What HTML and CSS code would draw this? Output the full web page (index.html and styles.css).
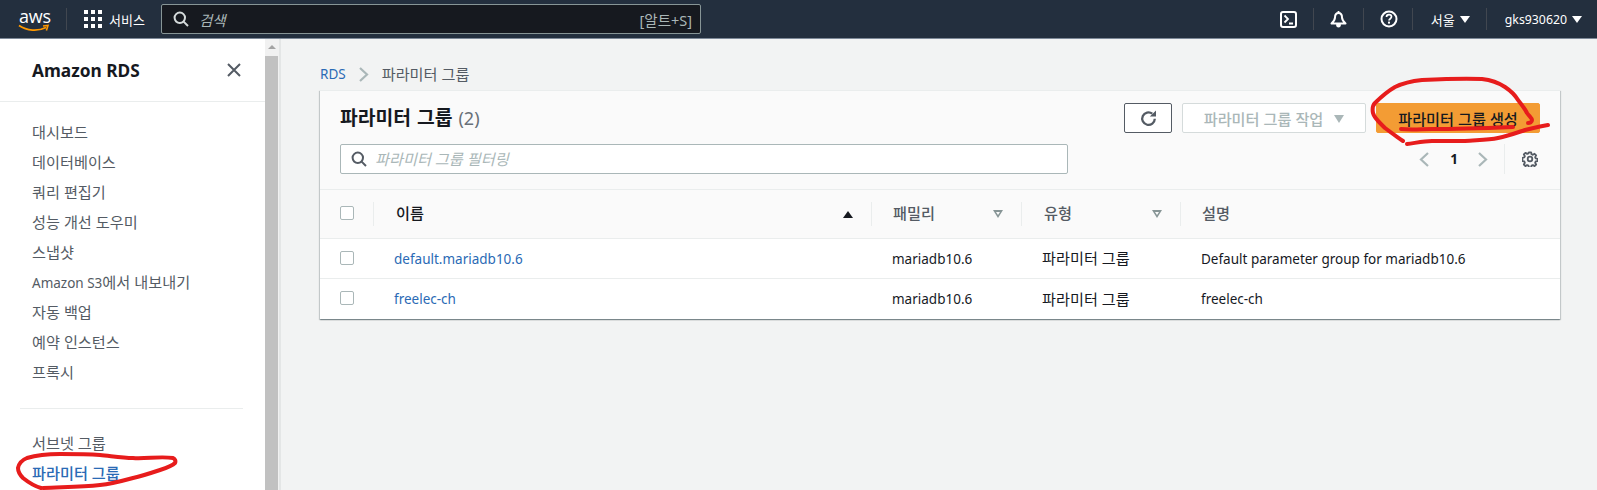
FILE: index.html
```html
<!DOCTYPE html>
<html lang="ko">
<head>
<meta charset="utf-8">
<title>파라미터 그룹</title>
<link rel="stylesheet" href="styles.css">
</head>
<body>
<header class="topbar">
  <div class="logo">
    <span class="logo-text">aws</span>
    <svg class="smile" viewBox="0 0 32 9" width="32" height="9"><path d="M1 1.500C9 7 20 7.500 28 3.500" fill="none" stroke="#f90" stroke-width="1.800"/><path d="M25 2l5-.5-1.600 5" fill="none" stroke="#f90" stroke-width="1.600"/></svg>
  </div>
  <span class="tdiv tdiv-logo"></span>
  <button class="services">
    <span class="grid-ic"><i></i><i></i><i></i><i></i><i></i><i></i><i></i><i></i><i></i></span>
    <span>서비스</span>
  </button>
  <div class="gsearch">
    <svg viewBox="0 0 16 16" width="16" height="16"><circle cx="6.800" cy="6.800" r="5.200" fill="none" stroke="#d5dbdb" stroke-width="2"/><path d="M10.600 10.600 15 15" stroke="#d5dbdb" stroke-width="2"/></svg>
    <span class="gs-text">검색</span>
    <span class="gs-key">[알트+S]</span>
  </div>
  <div class="tright">
    <svg class="ti" viewBox="0 0 17 17" width="17" height="17"><rect x="1" y="1" width="15" height="15" rx="2" fill="none" stroke="#fff" stroke-width="2"/><path d="M4.500 4.500l3.500 3.500-3.500 3.500M9 12.500h4" fill="none" stroke="#fff" stroke-width="1.800"/></svg>
    <span class="tdiv"></span>
    <svg class="ti" viewBox="0 0 17 17" width="17" height="17"><path d="M8.500 2C6 2 5 4 5 6.500c0 2.500-1.200 3.800-3.500 6h14c-2.300-2.200-3.500-3.500-3.500-6C12 4 11 2 8.500 2z" fill="none" stroke="#fff" stroke-width="2" stroke-linejoin="round"/><path d="M6.200 13h4.600v1.200a2.300 2.300 0 0 1-4.600 0z" fill="#fff"/><rect x="7.600" y="0" width="1.800" height="2.500" fill="#fff"/></svg>
    <span class="tdiv"></span>
    <svg class="ti ti-last" viewBox="0 0 18 18" width="18" height="18"><circle cx="9" cy="9" r="7.500" fill="none" stroke="#fff" stroke-width="2"/><path d="M6.500 7c0-1.500 1-2.400 2.500-2.400s2.500 1 2.500 2.200c0 1.800-2.500 2-2.500 3.700" fill="none" stroke="#fff" stroke-width="1.700"/><rect x="8" y="11.600" width="2" height="2" fill="#fff"/></svg>
    <span class="tdiv"></span>
    <span class="tmenu tmenu-ko">서울<i class="tri-w"></i></span>
    <span class="tdiv"></span>
    <span class="tmenu tmenu-end">gks930620<i class="tri-w"></i></span>
  </div>
</header>
<div class="page">
  <aside class="side">
    <div class="side-head">
      <h2>Amazon RDS</h2>
      <svg viewBox="0 0 14 14" width="14" height="14"><path d="M1 1l12 12M13 1 1 13" stroke="#545b64" stroke-width="2"/></svg>
    </div>
    <nav class="side-nav">
      <a>대시보드</a><a>데이터베이스</a><a>쿼리 편집기</a><a>성능 개선 도우미</a><a>스냅샷</a><a><span class="lat">Amazon S3</span>에서 내보내기</a><a>자동 백업</a><a>예약 인스턴스</a><a>프록시</a>
    </nav>
    <hr class="side-hr">
    <nav class="side-nav side-nav2">
      <a>서브넷 그룹</a><a class="active">파라미터 그룹</a>
    </nav>
  </aside>
  <div class="sbar"><span class="sbar-up"></span><span class="sbar-thumb"></span></div>
  <main class="main">
    <div class="crumbs">
      <a>RDS</a>
      <svg viewBox="0 0 10 15" width="10" height="15"><path d="M1 1l7 6.500-7 6.500" fill="none" stroke="#aab7b8" stroke-width="2.200"/></svg>
      <span class="ko">파라미터 그룹</span>
    </div>
    <section class="card">
      <div class="card-head">
        <div class="head-row">
          <h1>파라미터 그룹 <span>(2)</span></h1>
          <div class="actions">
            <button class="btn btn-refresh"><svg viewBox="0 0 17 17" width="17" height="17"><path d="M14.800 8.800A6.300 6.300 0 1 1 12.300 3.600" fill="none" stroke="#545b64" stroke-width="2.300"/><path d="M9.800 6.500h6.200V.4z" fill="#545b64"/></svg></button>
            <button class="btn btn-off">파라미터 그룹 작업<i class="tri-g"></i></button>
            <button class="btn btn-main">파라미터 그룹 생성</button>
          </div>
        </div>
        <div class="filter-row">
          <div class="filter">
            <svg viewBox="0 0 16 16" width="16" height="16"><circle cx="6.800" cy="6.800" r="5.200" fill="none" stroke="#545b64" stroke-width="2"/><path d="M10.600 10.600 15 15" stroke="#545b64" stroke-width="2"/></svg>
            <span>파라미터 그룹 필터링</span>
          </div>
          <div class="pager">
            <svg viewBox="0 0 10 15" width="10" height="15"><path d="M9 1 2 7.500 9 14" fill="none" stroke="#aab7b8" stroke-width="2.200"/></svg>
            <b>1</b>
            <svg viewBox="0 0 10 15" width="10" height="15"><path d="M1 1l7 6.500-7 6.500" fill="none" stroke="#aab7b8" stroke-width="2.200"/></svg>
            <span class="pager-div"></span>
            <svg viewBox="0 0 16 16" width="16" height="16"><circle cx="8" cy="8" r="2.300" fill="none" stroke="#545b64" stroke-width="1.800"/><path d="M6.800 1h2.400l.4 2 1.400.6 1.800-1.100 1.700 1.700-1.100 1.800.6 1.400 2 .4v2.400l-2 .4-.6 1.400 1.100 1.800-1.700 1.700-1.800-1.100-1.400.6-.4 2H6.800l-.4-2-1.400-.6-1.800 1.100-1.700-1.700 1.100-1.800-.6-1.400-2-.4V6.800l2-.4.6-1.400-1.100-1.800 1.700-1.700 1.800 1.100 1.400-.6z" fill="none" stroke="#545b64" stroke-width="1.900" stroke-linejoin="round" transform="translate(.4 .4) scale(.95)"/></svg>
          </div>
        </div>
      </div>
      <div class="trow thead">
        <div class="c-check"><i class="cb"></i><span class="cdiv"></span></div>
        <div class="c-name strong"><span>이름</span><i class="tri-k"></i><span class="cdiv"></span></div>
        <div class="c-fam"><span>패밀리</span><i class="tri-o"></i><span class="cdiv"></span></div>
        <div class="c-type"><span>유형</span><i class="tri-o"></i><span class="cdiv"></span></div>
        <div class="c-desc"><span>설명</span></div>
      </div>
      <div class="trow tbody">
        <div class="c-check"><i class="cb"></i></div>
        <div class="c-name"><a>default.mariadb10.6</a></div>
        <div class="c-fam">mariadb10.6</div>
        <div class="c-type ko">파라미터 그룹</div>
        <div class="c-desc">Default parameter group for mariadb10.6</div>
      </div>
      <div class="trow tbody last">
        <div class="c-check"><i class="cb"></i></div>
        <div class="c-name"><a>freelec-ch</a></div>
        <div class="c-fam">mariadb10.6</div>
        <div class="c-type ko">파라미터 그룹</div>
        <div class="c-desc">freelec-ch</div>
      </div>
    </section>
  </main>
</div>
<svg class="ink" viewBox="0 0 1597 490" width="1597" height="490">
  <g fill="none" stroke="#e71c1c" stroke-width="4" stroke-linecap="round" stroke-linejoin="round">
    <path d="M1403 141C1396 136 1390 132 1385 128C1380 123 1374 118 1373 113C1372 108 1373 105 1375 103C1381 97 1388 91 1395 87C1403 83 1412 81 1422 80C1442 79 1462 78 1482 79C1491 80 1499 83 1505 87C1511 91 1515 95 1518 100C1522 105 1525 109 1527 113C1529 116 1532 118 1532 120C1532 122 1530 123 1528 123"/>
    <path d="M1401 129C1412 130 1422 129 1432 129C1460 129 1487 128 1513 127"/>
    <path d="M1407 144C1415 143 1424 141 1432 141C1443 141 1454 141 1465 141C1476 140 1488 140 1498 138C1508 136 1516 133 1525 130C1533 128 1541 126 1548 125"/>
    <path d="M41 488C34 486 28 482 23 478C20 475 18 471 18 468C19 463 22 460 27 458C37 455 48 454 60 454C74 454 87 454 100 455C111 456 122 458 133 458C146 459 160 456 173 458C175 459 176 461 175 463C172 466 166 468 160 470C151 473 142 476 133 478C122 481 111 484 100 485C81 487 62 487 43 488"/>
  </g>
</svg>
</body>
</html>
```
FILE: styles.css
```css
* { box-sizing: border-box; }
html, body { margin: 0; padding: 0; height: 490px; overflow: hidden; }
body { position: relative; background: #f2f3f3; color: #16191f; font-family: "Noto Sans", "Noto Sans CJK KR", sans-serif; font-size: 13.500px; }
a { color: inherit; text-decoration: none; }
button { font: inherit; }
i { display: block; font-style: normal; }
.ko { font-size: 15.200px; }
.lat { font-size: 13.500px; }

.topbar { height: 39px; background: #232f3e; border-bottom: 1px solid #7d8998; display: flex; align-items: center; color: #fff; font-size: 12.500px; }
.logo { width: 66px; padding-left: 18px; height: 30px; display: flex; flex-direction: column; align-items: flex-start; flex: none; }
.logo-text { font-family: "Open Sans", sans-serif; font-size: 18px; line-height: 21px; letter-spacing: -.2px; margin-top: 2px; padding-left: 1px; }
.smile { margin-top: -3px; }
.tdiv { display: block; width: 1px; height: 22px; background: #414750; flex: none; }
.tdiv-logo { margin-right: 17px; }
.services { background: none; border: 0; color: #fff; display: flex; align-items: center; gap: 9px; padding: 0; width: 78px; flex: none; font-size: 13px; }
.grid-ic { display: grid; grid-template-columns: repeat(3, 4px); grid-auto-rows: 4px; gap: 3px; width: 16px; }
.grid-ic i { width: 4px; height: 4px; margin: 0; background: #fff; }
.gsearch { width: 540px; height: 30px; background: #16191f; border: 1px solid #879596; border-radius: 2px; display: flex; align-items: center; padding: 0 8px 0 11px; flex: none; margin-left: -1px; }
.gs-text { font-style: italic; color: #aab7b8; margin-left: 10px; font-size: 14.500px; flex: 1; }
.gs-key { color: #aab7b8; font-size: 14.500px; }
.tright { margin-left: auto; display: flex; align-items: center; padding-right: 15px; }
.ti { margin: 0 16px; }
.ti-last { margin-right: 14px; }
.tmenu { display: flex; align-items: center; gap: 5px; padding: 0 0 0 18px; }
.tmenu-ko { font-size: 13px; margin-right: 16px; }
.tmenu-end { font-size: 12.300px; }
.tri-w { width: 0; height: 0; border: 5px solid transparent; border-top: 7px solid #fff; border-bottom: 0; }

.page { display: flex; height: 451px; }
.side { width: 265px; flex: none; background: #fff; }
.side-head { height: 63px; border-bottom: 1px solid #eaeded; display: flex; justify-content: space-between; align-items: center; padding: 0 24px 0 32px; }
.side-head h2 { margin: 0; font-size: 17.300px; font-weight: 700; }
.side-nav { display: flex; flex-direction: column; padding: 15px 0 0 32px; color: #545b64; font-size: 15.200px; }
.side-nav a { height: 30px; line-height: 30px; }
.side-hr { border: 0; height: 1px; background: #eaeded; margin: 21px 22px 0 20px; }
.side-nav2 { padding-top: 19px; }
.side-nav .active { color: #2a6ab5; font-weight: 500; }
.sbar { width: 16px; flex: none; background: #f1f1f1; border-right: 2px solid #e4e6e6; padding-right: 1px; display: flex; flex-direction: column; align-items: stretch; }
.sbar-up { height: 17px; position: relative; }
.sbar-up::after { content: ""; position: absolute; left: 3px; top: 6px; border: 4px solid transparent; border-bottom: 4px solid #a3a3a3; border-top: 0; }
.sbar-thumb { flex: 1; background: #c1c1c1; }

.main { flex: 1; padding: 25px 37px 0 39px; }
.crumbs { height: 20px; display: flex; align-items: center; gap: 13px; color: #545b64; }
.crumbs a { color: #2a6ab5; padding-bottom: 1px; }
.crumbs .ko { padding-bottom: 2px; }
.card { margin-top: 6px; background: #fff; box-shadow: 0 1px 1px 0 rgba(0,28,36,.3), 1px 1px 1px 0 rgba(0,28,36,.15), -1px 1px 1px 0 rgba(0,28,36,.15); }
.card-head { height: 100px; background: #fafafa; border-top: 1px solid #eaeded; border-bottom: 1px solid #eaeded; padding: 12px 20px 0; }
.head-row { display: flex; justify-content: space-between; align-items: center; height: 30px; }
.head-row h1 { margin: 0 0 2px; font-size: 19.300px; font-weight: 700; word-spacing: 1px; }
.head-row h1 span { font-weight: 400; font-size: 18px; color: #687078; }
.actions { display: flex; gap: 10px; }
.btn { height: 30px; display: flex; align-items: center; justify-content: center; border-radius: 2px; font-size: 15.200px; padding-bottom: 2px; }
.btn-refresh { width: 48px; background: #fff; border: 1px solid #545b64; padding-bottom: 0; }
.btn-off { width: 184px; background: #fff; border: 1px solid #d5dbdb; color: #aab7b8; font-weight: 500; gap: 11px; }
.btn-main { width: 164px; border: 1px solid #f39c34; background: #f39c34; color: #16191f; font-weight: 500; }
.tri-g { width: 0; height: 0; border: 5.500px solid transparent; border-top: 8px solid #aab7b8; border-bottom: 0; margin-top: 2px; }
.filter-row { display: flex; justify-content: space-between; align-items: flex-start; margin-top: 11px; }
.filter { width: 728px; height: 30px; background: #fff; border: 1px solid #aab7b8; border-radius: 2px; display: flex; align-items: center; padding-left: 10px; gap: 8px; font-style: italic; color: #aab7b8; font-size: 15.200px; }
.filter span { padding-bottom: 2px; }
.pager { display: flex; align-items: center; height: 30px; margin-right: 2px; }
.pager b { margin: 0 20px 0 21px; font-weight: 700; }
.pager-div { width: 1px; height: 30px; background: #eaeded; margin: 0 17px 0 16px; }

.trow { display: flex; align-items: center; position: relative; }
.thead { height: 49px; background: #fafafa; border-bottom: 1px solid #eaeded; color: #545b64; font-weight: 500; font-size: 15.200px; }
.thead span:not(.cdiv) { padding-bottom: 5px; }
.tbody { height: 40px; border-bottom: 1px solid #eaeded; }
.tbody.last { border-bottom: 0; }
.c-check { width: 54px; padding-left: 20px; padding-bottom: 2px; flex: none; align-self: stretch; display: flex; align-items: center; position: relative; }
.cb { width: 14px; height: 14px; border: 1px solid #aab7b8; border-radius: 2px; background: #fff; }
.c-name { width: 498px; padding-left: 20px; flex: none; align-self: stretch; display: flex; align-items: center; position: relative; }
.c-name a { color: #2a6ab5; }
.strong { color: #16191f; }
.c-fam { width: 150px; padding-left: 20px; flex: none; align-self: stretch; display: flex; align-items: center; position: relative; }
.c-type { width: 159px; padding-left: 20px; flex: none; align-self: stretch; display: flex; align-items: center; position: relative; }
.tbody .c-type { padding-bottom: 3px; }
.c-desc { flex: 1; padding-left: 20px; align-self: stretch; display: flex; align-items: center; }
.thead .c-name, .thead .c-type { padding-left: 22px; }
.thead .c-fam, .thead .c-desc { padding-left: 21px; }
.cdiv { position: absolute; right: 0; top: 12px; height: 24px; width: 1px; background: #eaeded; }
.tri-k { position: absolute; right: 19px; top: 21px; width: 0; height: 0; border: 5px solid transparent; border-bottom: 7px solid #16191f; border-top: 0; }
.tri-o { position: absolute; right: 19px; top: 20px; width: 0; height: 0; border: 5px solid transparent; border-top: 8px solid #879596; border-bottom: 0; }
.tri-o::after { content: ""; position: absolute; left: -2.500px; top: -6.300px; border: 2.500px solid transparent; border-top: 3.500px solid #fafafa; border-bottom: 0; }

.ink { position: absolute; left: 0; top: 0; pointer-events: none; }
```
